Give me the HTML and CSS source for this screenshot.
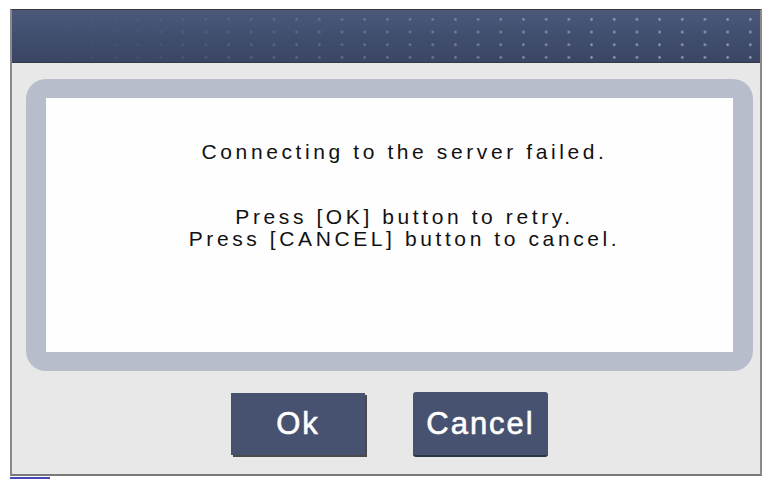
FILE: index.html
```html
<!DOCTYPE html>
<html>
<head>
<meta charset="utf-8">
<link rel="stylesheet" href="styles.css">
</head>
<body>
<div class="frame">
  <div class="titlebar"><div class="dots"></div></div>
  <div class="body">
    <div class="panel">
      <div class="message">
        <p class="line first">Connecting to the server failed.</p>
        <p class="line gap">Press [OK] button to retry.</p>
        <p class="line">Press [CANCEL] button to cancel.</p>
      </div>
    </div>
    <div class="actions">
      <button class="btn ok">Ok</button>
      <button class="btn cancel">Cancel</button>
    </div>
  </div>
</div>
<div class="tick"></div>
</body>
</html>
```
FILE: styles.css
```css
html, body {
  margin: 0;
  padding: 0;
  background: #ffffff;
}
body {
  font-family: "Liberation Sans", Arial, sans-serif;
  width: 774px;
  height: 489px;
  overflow: hidden;
}
.frame {
  margin: 9px 0 0 10px;
  width: 748px;
  height: 464px;
  border-top: 1px solid #3a3a3a;
  border-left: 2px solid #8a8a8a;
  border-right: 2px solid #8a8a8a;
  border-bottom: 2px solid #7a7a7a;
  background: #e8e8e8;
  display: flex;
  flex-direction: column;
}
.titlebar {
  height: 52px;
  background: linear-gradient(#4b587a, #404c6c 60%, #3a4664);
  border-bottom: 1px solid #333a4a;
  position: relative;
  overflow: hidden;
}
.dots {
  position: absolute;
  inset: 0;
  background-image: radial-gradient(circle, rgba(150,162,190,0.85) 1px, transparent 1.6px);
  background-size: 22.7px 12.7px;
  background-position: 1px 3px;
  -webkit-mask-image: linear-gradient(to right, transparent 0%, rgba(0,0,0,0.15) 20%, rgba(0,0,0,0.6) 55%, #000 80%);
  mask-image: linear-gradient(to right, transparent 0%, rgba(0,0,0,0.15) 20%, rgba(0,0,0,0.6) 55%, #000 80%);
}
.body {
  flex: 1;
  display: flex;
  flex-direction: column;
  padding: 16px 7px 0 14px;
}
.panel {
  height: 254px;
  background: #b8bdcc;
  border-radius: 20px;
  padding: 19px 20px;
}
.message {
  height: 100%;
  background: #fefefe;
  padding: 43px 0 0 30px;
  box-sizing: border-box;
  text-align: center;
  color: #111;
  font-size: 21px;
  letter-spacing: 3.6px;
}
.line {
  margin: 0;
  line-height: 22px;
}
.gap {
  margin-top: 43px;
}
.actions {
  display: flex;
  justify-content: center;
  gap: 48px;
  margin-top: 21px;
  align-items: flex-start;
}
.btn {
  font-family: "Liberation Sans", Arial, sans-serif;
  font-size: 31px;
  letter-spacing: 2px;
  color: #ffffff;
  background: #46526f;
  border: none;
  padding: 0;
  margin: 0;
  cursor: pointer;
  -webkit-text-stroke: 0.6px #ffffff;
}
.ok {
  width: 134px;
  height: 62px;
  margin-top: 1px;
  box-shadow: 2px 2px 0 #4a4a4a;
}
.cancel {
  width: 135px;
  height: 65px;
  border-radius: 3px;
  border-bottom: 2px solid #2c3447;
}
.tick {
  margin: 1px 0 0 10px;
  width: 40px;
  height: 2px;
  background: #4848b8;
}
```
